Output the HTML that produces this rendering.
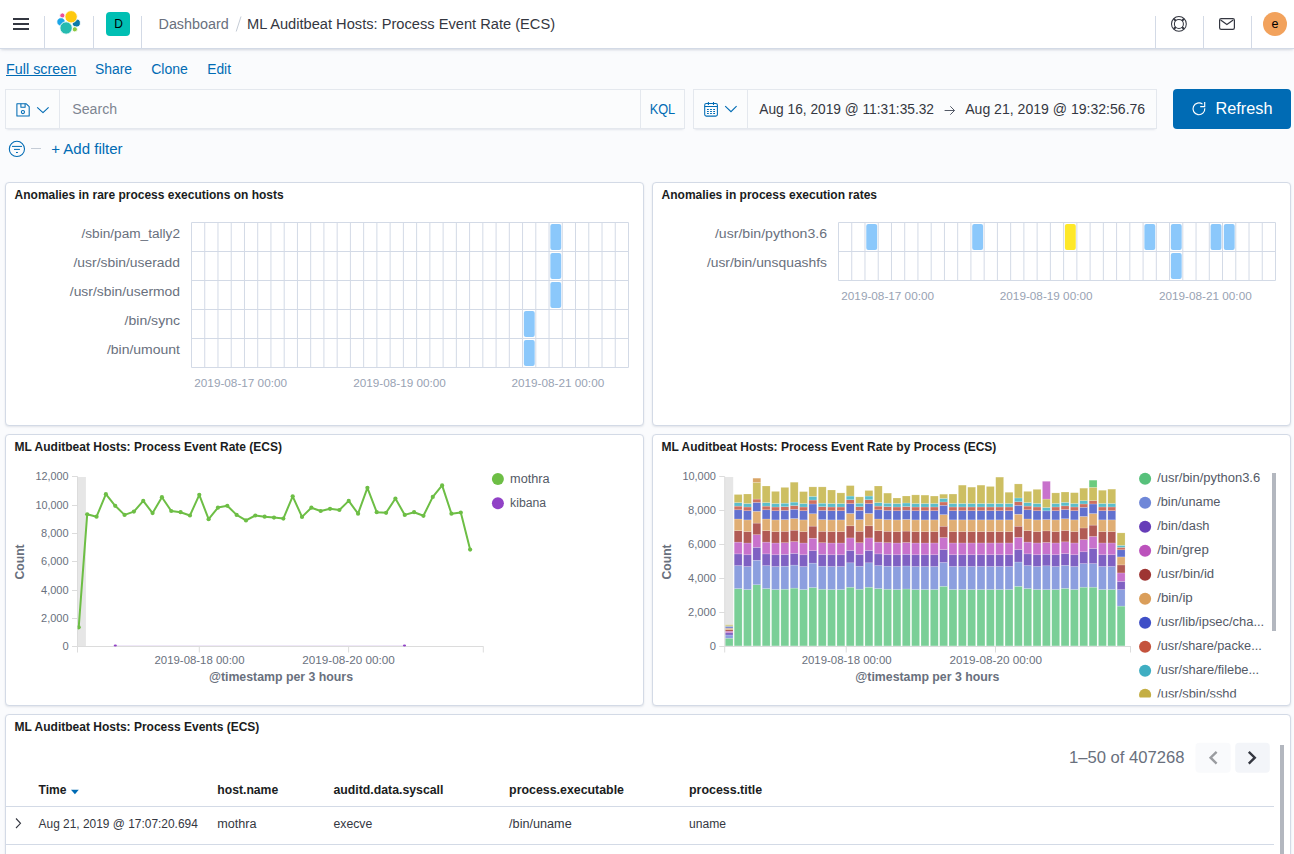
<!DOCTYPE html><html><head><meta charset="utf-8"><style>
*{box-sizing:border-box;margin:0;padding:0}
html,body{width:1294px;height:854px;overflow:hidden}
body{background:#FAFBFD;font-family:"Liberation Sans",sans-serif;color:#343741;position:relative}
.a{position:absolute}
.hdr{position:absolute;left:0;top:0;width:1294px;height:49px;background:#fff;border-bottom:1px solid #D3DAE6;box-shadow:0 2px 2px -1px rgba(152,162,179,.3),0 1px 5px -2px rgba(152,162,179,.3)}
.panel{position:absolute;background:#fff;border:1px solid #D3DAE6;border-radius:4px;box-shadow:0 1px 2px rgba(152,162,179,.25)}
.inp{position:absolute;background:#FBFCFD;border:1px solid #E4E8EE;box-shadow:0 1px 1px -1px rgba(152,162,179,.2),0 3px 2px -2px rgba(152,162,179,.2)}
svg.ov{position:absolute;left:0;top:0;font-family:"Liberation Sans",sans-serif}
</style></head><body>

<div class="hdr"></div>
<div class="inp" style="left:5px;top:89px;width:680px;height:40px"></div>
<div class="inp" style="left:693px;top:89px;width:464px;height:40px"></div>
<div class="panel" style="left:5px;top:182px;width:639px;height:244px"></div>
<div class="panel" style="left:652px;top:182px;width:639px;height:244px"></div>
<div class="panel" style="left:5px;top:434px;width:639px;height:272px"></div>
<div class="panel" style="left:652px;top:434px;width:639px;height:272px"></div>
<div class="panel" style="left:5px;top:714px;width:1286px;height:160px"></div>
<svg class="ov" width="1294" height="854" viewBox="0 0 1294 854">
<rect x="44" y="16" width="1" height="32" fill="#D3DAE6"/>
<rect x="93" y="16" width="1" height="32" fill="#D3DAE6"/>
<rect x="141" y="16" width="1" height="32" fill="#D3DAE6"/>
<rect x="1155" y="16" width="1" height="32" fill="#D3DAE6"/>
<rect x="1203" y="16" width="1" height="32" fill="#D3DAE6"/>
<rect x="1251" y="16" width="1" height="32" fill="#D3DAE6"/>
<g fill="#343741"><rect x="13" y="18" width="16" height="2"/><rect x="13" y="23" width="16" height="2"/><rect x="13" y="28" width="16" height="2"/></g>
<g stroke="#fff" stroke-width="0.9">
<circle cx="62.4" cy="15.5" r="2.6" fill="#EE4F97"/>
<circle cx="61" cy="21.9" r="4.2" fill="#1BA6E8"/>
<circle cx="76.3" cy="23" r="4.1" fill="#0B7AA8"/>
<circle cx="74.8" cy="29.3" r="2.6" fill="#8CC63F"/>
<circle cx="71.1" cy="16.8" r="6.2" fill="#FEC90E"/>
<circle cx="66.1" cy="28" r="6.2" fill="#26BBB0"/>
</g>
<rect x="106" y="12" width="24" height="24" rx="4" fill="#00BFB3"/>
<text x="118.60" y="27.70" font-size="12" fill="#000" text-anchor="middle" >D</text>
<text x="158.50" y="29.00" font-size="14" fill="#69707D" textLength="70.30" lengthAdjust="spacingAndGlyphs" >Dashboard</text>
<path d="M241 16.5L236.2 31.5" stroke="#C5CCD6" stroke-width="1"/>
<text x="247.10" y="29.00" font-size="14" fill="#343741" textLength="308.00" lengthAdjust="spacingAndGlyphs" >ML Auditbeat Hosts: Process Event Rate (ECS)</text>
<g fill="none" stroke="#343741">
<circle cx="1178.9" cy="23.9" r="7.4" stroke-width="1.05"/><circle cx="1178.9" cy="23.9" r="4.5" stroke-width="1.05"/>
<path d="M1181.94 26.94L1184.06 29.06 M1175.86 26.94L1173.74 29.06 M1175.86 20.86L1173.74 18.74 M1181.94 20.86L1184.06 18.74" stroke-width="2"/></g>
<g fill="none" stroke="#343741" stroke-width="1.2">
<rect x="1219.6" y="18.6" width="14.8" height="10.8" rx="1.6"/><path d="M1220.6 19.9L1226.9 24.6L1233.2 19.9"/></g>
<circle cx="1275" cy="24" r="12" fill="#F2A25C"/>
<text x="1275.10" y="27.90" font-size="12.5" fill="#000" text-anchor="middle" >e</text>
<text x="6.10" y="74.00" font-size="14" fill="#006BB4" textLength="70.00" lengthAdjust="spacingAndGlyphs" >Full screen</text>
<rect x="6" y="75" width="70.5" height="1" fill="#006BB4"/>
<text x="95.00" y="74.00" font-size="14" fill="#006BB4" textLength="37.10" lengthAdjust="spacingAndGlyphs" >Share</text>
<text x="151.20" y="74.00" font-size="14" fill="#006BB4" textLength="36.70" lengthAdjust="spacingAndGlyphs" >Clone</text>
<text x="207.20" y="74.00" font-size="14" fill="#006BB4" textLength="23.80" lengthAdjust="spacingAndGlyphs" >Edit</text>
<rect x="59" y="90" width="1" height="38" fill="#E4E8EE"/><rect x="640" y="90" width="1" height="38" fill="#E4E8EE"/>
<g fill="none" stroke="#006BB4" stroke-width="1.05" stroke-linejoin="round">
<path d="M16.9 103.8H26.3L29.2 106.7V115.9H16.9Z"/><path d="M20.9 103.8V107.2H25.1V103.8"/><circle cx="22.9" cy="112" r="1.6"/>
<path d="M37.2 107.4L43 112.6L48.6 107.4" stroke-width="1.15"/></g>
<text x="72.30" y="114.00" font-size="14" fill="#7E8591" textLength="44.80" lengthAdjust="spacingAndGlyphs" >Search</text>
<text x="649.70" y="114.00" font-size="14" fill="#006BB4" textLength="25.50" lengthAdjust="spacingAndGlyphs" >KQL</text>
<rect x="747" y="90" width="1" height="38" fill="#E4E8EE"/>
<g fill="none" stroke="#006BB4" stroke-width="1.05">
<rect x="704.7" y="103.4" width="12.7" height="12.7" rx="1.6"/><path d="M704.7 106.4H717.4M708.4 102V105M713.5 102V105"/>
<path d="M725.2 106.2L731 111.6L736.6 106.2" stroke-width="1.15"/></g>
<g fill="#006BB4"><rect x="707" y="109" width="1.8" height="1"/><rect x="710.1" y="109" width="1.8" height="1"/><rect x="713.2" y="109" width="1.8" height="1"/>
<rect x="707" y="111" width="1.8" height="1"/><rect x="710.1" y="111" width="1.8" height="1"/><rect x="713.2" y="111" width="1.8" height="1"/>
<rect x="707" y="113" width="1.8" height="1"/><rect x="710.1" y="113" width="1.8" height="1"/><rect x="713.2" y="113" width="1.8" height="1"/></g>
<text x="759.30" y="114.00" font-size="14" fill="#343741" textLength="174.70" lengthAdjust="spacingAndGlyphs" >Aug 16, 2019 @ 11:31:35.32</text>
<path d="M944.6 110.5H954.5M950.3 106.3L954.5 110.5L950.3 114.7" fill="none" stroke="#535966" stroke-width="1"/>
<text x="965.20" y="114.00" font-size="14" fill="#343741" textLength="180.00" lengthAdjust="spacingAndGlyphs" >Aug 21, 2019 @ 19:32:56.76</text>
<rect x="1173" y="89" width="118" height="40" rx="4" fill="#006BB4"/>
<g fill="none" stroke="#fff" stroke-width="1.15">
<path d="M1204.78 108.29A5.9 5.9 0 1 1 1202.53 104.15"/><path d="M1204.7 102.1V106.6H1200.2"/></g>
<text x="1215.50" y="114.00" font-size="16" fill="#fff" textLength="57.00" lengthAdjust="spacingAndGlyphs" >Refresh</text>
<g fill="none" stroke="#006BB4" stroke-width="1.05">
<circle cx="16.9" cy="148.9" r="7.6"/></g><g fill="#006BB4"><rect x="12" y="145.9" width="10" height="1"/><rect x="14" y="148.9" width="5.9" height="1"/><rect x="16" y="152" width="1.9" height="1"/></g>
<rect x="31" y="148" width="10" height="1" fill="#C5CCD6"/>
<text x="51.20" y="154.00" font-size="14" fill="#006BB4" textLength="71.40" lengthAdjust="spacingAndGlyphs" >+ Add filter</text>
<text x="14.60" y="199.10" font-size="12" fill="#1a1c21" font-weight="bold" textLength="269.00" lengthAdjust="spacingAndGlyphs" >Anomalies in rare process executions on hosts</text>
<text x="661.60" y="199.10" font-size="12" fill="#1a1c21" font-weight="bold" >Anomalies in process execution rates</text>
<text x="14.60" y="451.00" font-size="12" fill="#1a1c21" font-weight="bold" >ML Auditbeat Hosts: Process Event Rate (ECS)</text>
<text x="661.60" y="451.00" font-size="12" fill="#1a1c21" font-weight="bold" >ML Auditbeat Hosts: Process Event Rate by Process (ECS)</text>
<text x="14.60" y="731.00" font-size="12" fill="#1a1c21" font-weight="bold" >ML Auditbeat Hosts: Process Events (ECS)</text>
<path d="M191.50 222.5V367.5 M204.74 222.5V367.5 M217.98 222.5V367.5 M231.23 222.5V367.5 M244.47 222.5V367.5 M257.71 222.5V367.5 M270.95 222.5V367.5 M284.20 222.5V367.5 M297.44 222.5V367.5 M310.68 222.5V367.5 M323.92 222.5V367.5 M337.17 222.5V367.5 M350.41 222.5V367.5 M363.65 222.5V367.5 M376.89 222.5V367.5 M390.14 222.5V367.5 M403.38 222.5V367.5 M416.62 222.5V367.5 M429.86 222.5V367.5 M443.11 222.5V367.5 M456.35 222.5V367.5 M469.59 222.5V367.5 M482.83 222.5V367.5 M496.08 222.5V367.5 M509.32 222.5V367.5 M522.56 222.5V367.5 M535.80 222.5V367.5 M549.05 222.5V367.5 M562.29 222.5V367.5 M575.53 222.5V367.5 M588.77 222.5V367.5 M602.02 222.5V367.5 M615.26 222.5V367.5 M628.50 222.5V367.5 M191.5 222.5H628.5 M191.5 251.5H628.5 M191.5 280.5H628.5 M191.5 309.5H628.5 M191.5 338.5H628.5 M191.5 367.5H628.5" stroke="#D3DAE6" stroke-width="1" fill="none"/>
<rect x="550.35" y="223.90" width="10.84" height="26.10" rx="2" fill="#8BC8FB"/>
<rect x="550.35" y="252.90" width="10.84" height="26.10" rx="2" fill="#8BC8FB"/>
<rect x="550.35" y="281.90" width="10.84" height="26.10" rx="2" fill="#8BC8FB"/>
<rect x="523.86" y="310.90" width="10.84" height="26.10" rx="2" fill="#8BC8FB"/>
<rect x="523.86" y="339.90" width="10.84" height="26.10" rx="2" fill="#8BC8FB"/>
<text x="180.00" y="238.10" font-size="12.5" fill="#69707D" text-anchor="end" textLength="98.50" lengthAdjust="spacingAndGlyphs" >/sbin/pam_tally2</text>
<text x="180.00" y="267.10" font-size="12.5" fill="#69707D" text-anchor="end" textLength="106.50" lengthAdjust="spacingAndGlyphs" >/usr/sbin/useradd</text>
<text x="180.00" y="296.10" font-size="12.5" fill="#69707D" text-anchor="end" textLength="110.20" lengthAdjust="spacingAndGlyphs" >/usr/sbin/usermod</text>
<text x="180.00" y="325.10" font-size="12.5" fill="#69707D" text-anchor="end" textLength="55.40" lengthAdjust="spacingAndGlyphs" >/bin/sync</text>
<text x="180.00" y="354.10" font-size="12.5" fill="#69707D" text-anchor="end" textLength="73.10" lengthAdjust="spacingAndGlyphs" >/bin/umount</text>
<text x="194.30" y="386.80" font-size="11" fill="#98A2B3" textLength="92.70" lengthAdjust="spacingAndGlyphs" >2019-08-17 00:00</text>
<text x="353.20" y="386.80" font-size="11" fill="#98A2B3" textLength="92.70" lengthAdjust="spacingAndGlyphs" >2019-08-19 00:00</text>
<text x="511.50" y="386.80" font-size="11" fill="#98A2B3" textLength="92.70" lengthAdjust="spacingAndGlyphs" >2019-08-21 00:00</text>
<path d="M838.50 222.5V280.5 M851.74 222.5V280.5 M864.98 222.5V280.5 M878.23 222.5V280.5 M891.47 222.5V280.5 M904.71 222.5V280.5 M917.95 222.5V280.5 M931.20 222.5V280.5 M944.44 222.5V280.5 M957.68 222.5V280.5 M970.92 222.5V280.5 M984.17 222.5V280.5 M997.41 222.5V280.5 M1010.65 222.5V280.5 M1023.89 222.5V280.5 M1037.14 222.5V280.5 M1050.38 222.5V280.5 M1063.62 222.5V280.5 M1076.86 222.5V280.5 M1090.11 222.5V280.5 M1103.35 222.5V280.5 M1116.59 222.5V280.5 M1129.83 222.5V280.5 M1143.08 222.5V280.5 M1156.32 222.5V280.5 M1169.56 222.5V280.5 M1182.80 222.5V280.5 M1196.05 222.5V280.5 M1209.29 222.5V280.5 M1222.53 222.5V280.5 M1235.77 222.5V280.5 M1249.02 222.5V280.5 M1262.26 222.5V280.5 M1275.50 222.5V280.5 M838.5 222.5H1275.5 M838.5 251.5H1275.5 M838.5 280.5H1275.5" stroke="#D3DAE6" stroke-width="1" fill="none"/>
<rect x="866.28" y="223.90" width="10.84" height="26.10" rx="2" fill="#8BC8FB"/>
<rect x="972.22" y="223.90" width="10.84" height="26.10" rx="2" fill="#8BC8FB"/>
<rect x="1064.92" y="223.90" width="10.84" height="26.10" rx="2" fill="#FEE829"/>
<rect x="1144.38" y="223.90" width="10.84" height="26.10" rx="2" fill="#8BC8FB"/>
<rect x="1170.86" y="223.90" width="10.84" height="26.10" rx="2" fill="#8BC8FB"/>
<rect x="1210.59" y="223.90" width="10.84" height="26.10" rx="2" fill="#8BC8FB"/>
<rect x="1223.83" y="223.90" width="10.84" height="26.10" rx="2" fill="#8BC8FB"/>
<rect x="1170.86" y="252.90" width="10.84" height="26.10" rx="2" fill="#8BC8FB"/>
<text x="827.00" y="238.10" font-size="12.5" fill="#69707D" text-anchor="end" textLength="112.10" lengthAdjust="spacingAndGlyphs" >/usr/bin/python3.6</text>
<text x="827.00" y="267.10" font-size="12.5" fill="#69707D" text-anchor="end" textLength="120.10" lengthAdjust="spacingAndGlyphs" >/usr/bin/unsquashfs</text>
<text x="841.30" y="299.80" font-size="11" fill="#98A2B3" textLength="92.70" lengthAdjust="spacingAndGlyphs" >2019-08-17 00:00</text>
<text x="999.80" y="299.80" font-size="11" fill="#98A2B3" textLength="92.70" lengthAdjust="spacingAndGlyphs" >2019-08-19 00:00</text>
<text x="1159.00" y="299.80" font-size="11" fill="#98A2B3" textLength="92.70" lengthAdjust="spacingAndGlyphs" >2019-08-21 00:00</text>
<rect x="77.7" y="477" width="8.2" height="169.5" fill="#E6E6E6"/>
<rect x="77" y="476.4" width="1" height="170.5" fill="#DCDCDC"/>
<rect x="77" y="646" width="406.5" height="1" fill="#DCDCDC"/>
<rect x="77.00" y="646.5" width="1" height="6" fill="#DCDCDC"/>
<rect x="198.80" y="646.5" width="1" height="6" fill="#DCDCDC"/>
<rect x="348.10" y="646.5" width="1" height="6" fill="#DCDCDC"/>
<rect x="482.80" y="646.5" width="1" height="6" fill="#DCDCDC"/>
<rect x="72.00" y="646.00" width="5.5" height="1" fill="#DCDCDC"/>
<text x="68.60" y="650.40" font-size="11" fill="#69707D" text-anchor="end" textLength="6.20" lengthAdjust="spacingAndGlyphs" >0</text>
<rect x="72.00" y="618.00" width="5.5" height="1" fill="#DCDCDC"/>
<text x="68.60" y="622.40" font-size="11" fill="#69707D" text-anchor="end" textLength="27.58" lengthAdjust="spacingAndGlyphs" >2,000</text>
<rect x="72.00" y="590.00" width="5.5" height="1" fill="#DCDCDC"/>
<text x="68.60" y="594.40" font-size="11" fill="#69707D" text-anchor="end" textLength="27.58" lengthAdjust="spacingAndGlyphs" >4,000</text>
<rect x="72.00" y="561.00" width="5.5" height="1" fill="#DCDCDC"/>
<text x="68.60" y="565.40" font-size="11" fill="#69707D" text-anchor="end" textLength="27.58" lengthAdjust="spacingAndGlyphs" >6,000</text>
<rect x="72.00" y="533.00" width="5.5" height="1" fill="#DCDCDC"/>
<text x="68.60" y="537.40" font-size="11" fill="#69707D" text-anchor="end" textLength="27.58" lengthAdjust="spacingAndGlyphs" >8,000</text>
<rect x="72.00" y="505.00" width="5.5" height="1" fill="#DCDCDC"/>
<text x="68.60" y="509.40" font-size="11" fill="#69707D" text-anchor="end" textLength="33.10" lengthAdjust="spacingAndGlyphs" >10,000</text>
<rect x="72.00" y="476.00" width="5.5" height="1" fill="#DCDCDC"/>
<text x="68.60" y="480.40" font-size="11" fill="#69707D" text-anchor="end" textLength="33.10" lengthAdjust="spacingAndGlyphs" >12,000</text>
<text x="154.50" y="663.70" font-size="11" fill="#69707D" textLength="90.00" lengthAdjust="spacingAndGlyphs" >2019-08-18 00:00</text>
<text x="302.30" y="663.70" font-size="11" fill="#69707D" textLength="92.50" lengthAdjust="spacingAndGlyphs" >2019-08-20 00:00</text>
<text x="208.90" y="681.10" font-size="12" fill="#69707D" font-weight="bold" textLength="144.10" lengthAdjust="spacingAndGlyphs" >@timestamp per 3 hours</text>
<text x="0.00" y="0.00" font-size="12" fill="#69707D" font-weight="bold" text-anchor="middle" textLength="35.00" lengthAdjust="spacingAndGlyphs" transform="translate(23.9,561.9) rotate(-90)">Count</text>
<rect x="115" y="645" width="290" height="1" fill="#EFE8F7"/>
<ellipse cx="115.3" cy="645.4" rx="1.6" ry="1" fill="#9141C6"/><ellipse cx="404.5" cy="645.4" rx="1.6" ry="1" fill="#9141C6"/>
<clipPath id="lcc"><rect x="77.6" y="470" width="410" height="180"/></clipPath><g clip-path="url(#lcc)">
<polyline fill="none" stroke="#6DBE45" stroke-width="2" stroke-linejoin="round" points="78.70,627.30 87.20,514.30 96.54,516.70 105.88,494.20 115.22,505.80 124.56,514.90 133.90,511.60 143.24,500.90 152.58,513.10 161.92,497.20 171.26,511.00 180.60,512.20 189.94,515.50 199.28,494.80 208.62,519.20 217.96,507.60 227.30,505.80 236.64,514.90 245.98,520.40 255.32,515.50 264.66,516.70 274.00,517.60 283.34,518.60 292.68,496.30 302.02,516.90 311.36,507.70 320.70,511.00 330.04,508.80 339.38,510.00 348.72,500.90 358.06,513.70 367.40,487.80 376.74,512.20 386.08,512.80 395.42,498.50 404.76,514.90 414.10,512.20 423.44,515.80 432.78,496.90 442.12,485.40 451.46,513.70 460.80,512.50 470.14,549.60"/>
<g fill="#6DBE45"><circle cx="78.70" cy="627.30" r="2.1"/><circle cx="87.20" cy="514.30" r="2.1"/><circle cx="96.54" cy="516.70" r="2.1"/><circle cx="105.88" cy="494.20" r="2.1"/><circle cx="115.22" cy="505.80" r="2.1"/><circle cx="124.56" cy="514.90" r="2.1"/><circle cx="133.90" cy="511.60" r="2.1"/><circle cx="143.24" cy="500.90" r="2.1"/><circle cx="152.58" cy="513.10" r="2.1"/><circle cx="161.92" cy="497.20" r="2.1"/><circle cx="171.26" cy="511.00" r="2.1"/><circle cx="180.60" cy="512.20" r="2.1"/><circle cx="189.94" cy="515.50" r="2.1"/><circle cx="199.28" cy="494.80" r="2.1"/><circle cx="208.62" cy="519.20" r="2.1"/><circle cx="217.96" cy="507.60" r="2.1"/><circle cx="227.30" cy="505.80" r="2.1"/><circle cx="236.64" cy="514.90" r="2.1"/><circle cx="245.98" cy="520.40" r="2.1"/><circle cx="255.32" cy="515.50" r="2.1"/><circle cx="264.66" cy="516.70" r="2.1"/><circle cx="274.00" cy="517.60" r="2.1"/><circle cx="283.34" cy="518.60" r="2.1"/><circle cx="292.68" cy="496.30" r="2.1"/><circle cx="302.02" cy="516.90" r="2.1"/><circle cx="311.36" cy="507.70" r="2.1"/><circle cx="320.70" cy="511.00" r="2.1"/><circle cx="330.04" cy="508.80" r="2.1"/><circle cx="339.38" cy="510.00" r="2.1"/><circle cx="348.72" cy="500.90" r="2.1"/><circle cx="358.06" cy="513.70" r="2.1"/><circle cx="367.40" cy="487.80" r="2.1"/><circle cx="376.74" cy="512.20" r="2.1"/><circle cx="386.08" cy="512.80" r="2.1"/><circle cx="395.42" cy="498.50" r="2.1"/><circle cx="404.76" cy="514.90" r="2.1"/><circle cx="414.10" cy="512.20" r="2.1"/><circle cx="423.44" cy="515.80" r="2.1"/><circle cx="432.78" cy="496.90" r="2.1"/><circle cx="442.12" cy="485.40" r="2.1"/><circle cx="451.46" cy="513.70" r="2.1"/><circle cx="460.80" cy="512.50" r="2.1"/><circle cx="470.14" cy="549.60" r="2.1"/></g></g>
<circle cx="497.9" cy="479" r="6" fill="#6DBE45"/><circle cx="497.9" cy="503.3" r="6" fill="#9141C6"/>
<text x="510.10" y="483.00" font-size="12" fill="#535966" textLength="39.60" lengthAdjust="spacingAndGlyphs" >mothra</text>
<text x="510.10" y="507.20" font-size="12" fill="#535966" textLength="36.00" lengthAdjust="spacingAndGlyphs" >kibana</text>
<rect x="725" y="477" width="8.2" height="169.5" fill="#E6E6E6"/>
<g stroke="#fff" stroke-opacity="0.35" stroke-width="0.5"><rect x="734.20" y="588.60" width="7.9" height="57.30" fill="#7ACF97"/><rect x="734.20" y="565.60" width="7.9" height="23.00" fill="#8C9FDF"/><rect x="734.20" y="553.90" width="7.9" height="11.70" fill="#7F61C3"/><rect x="734.20" y="542.10" width="7.9" height="11.80" fill="#C872CC"/><rect x="734.20" y="530.70" width="7.9" height="11.40" fill="#B15A55"/><rect x="734.20" y="519.00" width="7.9" height="11.70" fill="#E0AE74"/><rect x="734.20" y="509.80" width="7.9" height="9.20" fill="#6271CF"/><rect x="734.20" y="506.10" width="7.9" height="3.70" fill="#CE6F5F"/><rect x="734.20" y="502.60" width="7.9" height="3.50" fill="#5BBDCB"/><rect x="734.20" y="494.50" width="7.9" height="8.10" fill="#CDBF62"/><rect x="743.54" y="589.50" width="7.9" height="56.40" fill="#7ACF97"/><rect x="743.54" y="566.50" width="7.9" height="23.00" fill="#8C9FDF"/><rect x="743.54" y="554.80" width="7.9" height="11.70" fill="#7F61C3"/><rect x="743.54" y="543.00" width="7.9" height="11.80" fill="#C872CC"/><rect x="743.54" y="531.60" width="7.9" height="11.40" fill="#B15A55"/><rect x="743.54" y="519.90" width="7.9" height="11.70" fill="#E0AE74"/><rect x="743.54" y="510.70" width="7.9" height="9.20" fill="#6271CF"/><rect x="743.54" y="507.00" width="7.9" height="3.70" fill="#CE6F5F"/><rect x="743.54" y="503.50" width="7.9" height="3.50" fill="#5BBDCB"/><rect x="743.54" y="494.00" width="7.9" height="9.50" fill="#CDBF62"/><rect x="762.22" y="588.60" width="7.9" height="57.30" fill="#7ACF97"/><rect x="762.22" y="565.60" width="7.9" height="23.00" fill="#8C9FDF"/><rect x="762.22" y="553.90" width="7.9" height="11.70" fill="#7F61C3"/><rect x="762.22" y="542.10" width="7.9" height="11.80" fill="#C872CC"/><rect x="762.22" y="530.70" width="7.9" height="11.40" fill="#B15A55"/><rect x="762.22" y="519.00" width="7.9" height="11.70" fill="#E0AE74"/><rect x="762.22" y="509.80" width="7.9" height="9.20" fill="#6271CF"/><rect x="762.22" y="506.10" width="7.9" height="3.70" fill="#CE6F5F"/><rect x="762.22" y="502.60" width="7.9" height="3.50" fill="#5BBDCB"/><rect x="762.22" y="486.00" width="7.9" height="16.60" fill="#CDBF62"/><rect x="771.56" y="589.50" width="7.9" height="56.40" fill="#7ACF97"/><rect x="771.56" y="566.50" width="7.9" height="23.00" fill="#8C9FDF"/><rect x="771.56" y="554.80" width="7.9" height="11.70" fill="#7F61C3"/><rect x="771.56" y="543.00" width="7.9" height="11.80" fill="#C872CC"/><rect x="771.56" y="531.60" width="7.9" height="11.40" fill="#B15A55"/><rect x="771.56" y="519.90" width="7.9" height="11.70" fill="#E0AE74"/><rect x="771.56" y="510.70" width="7.9" height="9.20" fill="#6271CF"/><rect x="771.56" y="507.00" width="7.9" height="3.70" fill="#CE6F5F"/><rect x="771.56" y="503.50" width="7.9" height="3.50" fill="#5BBDCB"/><rect x="771.56" y="491.40" width="7.9" height="12.10" fill="#CDBF62"/><rect x="780.90" y="589.20" width="7.9" height="56.70" fill="#7ACF97"/><rect x="780.90" y="566.20" width="7.9" height="23.00" fill="#8C9FDF"/><rect x="780.90" y="554.50" width="7.9" height="11.70" fill="#7F61C3"/><rect x="780.90" y="542.70" width="7.9" height="11.80" fill="#C872CC"/><rect x="780.90" y="531.30" width="7.9" height="11.40" fill="#B15A55"/><rect x="780.90" y="519.60" width="7.9" height="11.70" fill="#E0AE74"/><rect x="780.90" y="510.40" width="7.9" height="9.20" fill="#6271CF"/><rect x="780.90" y="506.70" width="7.9" height="3.70" fill="#CE6F5F"/><rect x="780.90" y="503.20" width="7.9" height="3.50" fill="#5BBDCB"/><rect x="780.90" y="487.40" width="7.9" height="15.80" fill="#CDBF62"/><rect x="790.24" y="588.10" width="7.9" height="57.80" fill="#7ACF97"/><rect x="790.24" y="565.10" width="7.9" height="23.00" fill="#8C9FDF"/><rect x="790.24" y="553.40" width="7.9" height="11.70" fill="#7F61C3"/><rect x="790.24" y="541.60" width="7.9" height="11.80" fill="#C872CC"/><rect x="790.24" y="530.20" width="7.9" height="11.40" fill="#B15A55"/><rect x="790.24" y="518.50" width="7.9" height="11.70" fill="#E0AE74"/><rect x="790.24" y="509.30" width="7.9" height="9.20" fill="#6271CF"/><rect x="790.24" y="505.60" width="7.9" height="3.70" fill="#CE6F5F"/><rect x="790.24" y="502.10" width="7.9" height="3.50" fill="#5BBDCB"/><rect x="790.24" y="482.20" width="7.9" height="19.90" fill="#CDBF62"/><rect x="799.58" y="589.50" width="7.9" height="56.40" fill="#7ACF97"/><rect x="799.58" y="566.50" width="7.9" height="23.00" fill="#8C9FDF"/><rect x="799.58" y="554.80" width="7.9" height="11.70" fill="#7F61C3"/><rect x="799.58" y="543.00" width="7.9" height="11.80" fill="#C872CC"/><rect x="799.58" y="531.60" width="7.9" height="11.40" fill="#B15A55"/><rect x="799.58" y="519.90" width="7.9" height="11.70" fill="#E0AE74"/><rect x="799.58" y="510.70" width="7.9" height="9.20" fill="#6271CF"/><rect x="799.58" y="507.00" width="7.9" height="3.70" fill="#CE6F5F"/><rect x="799.58" y="503.50" width="7.9" height="3.50" fill="#5BBDCB"/><rect x="799.58" y="491.60" width="7.9" height="11.90" fill="#CDBF62"/><rect x="808.92" y="587.50" width="7.9" height="58.40" fill="#7ACF97"/><rect x="808.92" y="563.12" width="7.9" height="24.38" fill="#8C9FDF"/><rect x="808.92" y="550.72" width="7.9" height="12.40" fill="#7F61C3"/><rect x="808.92" y="538.21" width="7.9" height="12.51" fill="#C872CC"/><rect x="808.92" y="526.13" width="7.9" height="12.08" fill="#B15A55"/><rect x="808.92" y="513.72" width="7.9" height="12.40" fill="#E0AE74"/><rect x="808.92" y="503.97" width="7.9" height="9.75" fill="#6271CF"/><rect x="808.92" y="500.05" width="7.9" height="3.92" fill="#CE6F5F"/><rect x="808.92" y="496.34" width="7.9" height="3.71" fill="#5BBDCB"/><rect x="808.92" y="486.90" width="7.9" height="9.44" fill="#CDBF62"/><rect x="818.26" y="589.20" width="7.9" height="56.70" fill="#7ACF97"/><rect x="818.26" y="566.20" width="7.9" height="23.00" fill="#8C9FDF"/><rect x="818.26" y="554.50" width="7.9" height="11.70" fill="#7F61C3"/><rect x="818.26" y="542.70" width="7.9" height="11.80" fill="#C872CC"/><rect x="818.26" y="531.30" width="7.9" height="11.40" fill="#B15A55"/><rect x="818.26" y="519.60" width="7.9" height="11.70" fill="#E0AE74"/><rect x="818.26" y="510.40" width="7.9" height="9.20" fill="#6271CF"/><rect x="818.26" y="506.70" width="7.9" height="3.70" fill="#CE6F5F"/><rect x="818.26" y="503.20" width="7.9" height="3.50" fill="#5BBDCB"/><rect x="818.26" y="486.90" width="7.9" height="16.30" fill="#CDBF62"/><rect x="827.60" y="589.50" width="7.9" height="56.40" fill="#7ACF97"/><rect x="827.60" y="566.50" width="7.9" height="23.00" fill="#8C9FDF"/><rect x="827.60" y="554.80" width="7.9" height="11.70" fill="#7F61C3"/><rect x="827.60" y="543.00" width="7.9" height="11.80" fill="#C872CC"/><rect x="827.60" y="531.60" width="7.9" height="11.40" fill="#B15A55"/><rect x="827.60" y="519.90" width="7.9" height="11.70" fill="#E0AE74"/><rect x="827.60" y="510.70" width="7.9" height="9.20" fill="#6271CF"/><rect x="827.60" y="507.00" width="7.9" height="3.70" fill="#CE6F5F"/><rect x="827.60" y="503.50" width="7.9" height="3.50" fill="#5BBDCB"/><rect x="827.60" y="490.00" width="7.9" height="13.50" fill="#CDBF62"/><rect x="836.94" y="589.50" width="7.9" height="56.40" fill="#7ACF97"/><rect x="836.94" y="566.50" width="7.9" height="23.00" fill="#8C9FDF"/><rect x="836.94" y="554.80" width="7.9" height="11.70" fill="#7F61C3"/><rect x="836.94" y="543.00" width="7.9" height="11.80" fill="#C872CC"/><rect x="836.94" y="531.60" width="7.9" height="11.40" fill="#B15A55"/><rect x="836.94" y="519.90" width="7.9" height="11.70" fill="#E0AE74"/><rect x="836.94" y="510.70" width="7.9" height="9.20" fill="#6271CF"/><rect x="836.94" y="507.00" width="7.9" height="3.70" fill="#CE6F5F"/><rect x="836.94" y="503.50" width="7.9" height="3.50" fill="#5BBDCB"/><rect x="836.94" y="492.90" width="7.9" height="10.60" fill="#CDBF62"/><rect x="846.28" y="587.20" width="7.9" height="58.70" fill="#7ACF97"/><rect x="846.28" y="562.82" width="7.9" height="24.38" fill="#8C9FDF"/><rect x="846.28" y="550.42" width="7.9" height="12.40" fill="#7F61C3"/><rect x="846.28" y="537.91" width="7.9" height="12.51" fill="#C872CC"/><rect x="846.28" y="525.83" width="7.9" height="12.08" fill="#B15A55"/><rect x="846.28" y="513.42" width="7.9" height="12.40" fill="#E0AE74"/><rect x="846.28" y="503.67" width="7.9" height="9.75" fill="#6271CF"/><rect x="846.28" y="499.75" width="7.9" height="3.92" fill="#CE6F5F"/><rect x="846.28" y="496.04" width="7.9" height="3.71" fill="#5BBDCB"/><rect x="846.28" y="485.60" width="7.9" height="10.44" fill="#CDBF62"/><rect x="855.62" y="589.20" width="7.9" height="56.70" fill="#7ACF97"/><rect x="855.62" y="566.20" width="7.9" height="23.00" fill="#8C9FDF"/><rect x="855.62" y="554.50" width="7.9" height="11.70" fill="#7F61C3"/><rect x="855.62" y="542.70" width="7.9" height="11.80" fill="#C872CC"/><rect x="855.62" y="531.30" width="7.9" height="11.40" fill="#B15A55"/><rect x="855.62" y="519.60" width="7.9" height="11.70" fill="#E0AE74"/><rect x="855.62" y="510.40" width="7.9" height="9.20" fill="#6271CF"/><rect x="855.62" y="506.70" width="7.9" height="3.70" fill="#CE6F5F"/><rect x="855.62" y="503.20" width="7.9" height="3.50" fill="#5BBDCB"/><rect x="855.62" y="496.90" width="7.9" height="6.30" fill="#CDBF62"/><rect x="864.96" y="587.20" width="7.9" height="58.70" fill="#7ACF97"/><rect x="864.96" y="562.82" width="7.9" height="24.38" fill="#8C9FDF"/><rect x="864.96" y="550.42" width="7.9" height="12.40" fill="#7F61C3"/><rect x="864.96" y="537.91" width="7.9" height="12.51" fill="#C872CC"/><rect x="864.96" y="525.83" width="7.9" height="12.08" fill="#B15A55"/><rect x="864.96" y="513.42" width="7.9" height="12.40" fill="#E0AE74"/><rect x="864.96" y="503.67" width="7.9" height="9.75" fill="#6271CF"/><rect x="864.96" y="499.75" width="7.9" height="3.92" fill="#CE6F5F"/><rect x="864.96" y="496.04" width="7.9" height="3.71" fill="#5BBDCB"/><rect x="864.96" y="490.50" width="7.9" height="5.54" fill="#CDBF62"/><rect x="874.30" y="588.60" width="7.9" height="57.30" fill="#7ACF97"/><rect x="874.30" y="565.60" width="7.9" height="23.00" fill="#8C9FDF"/><rect x="874.30" y="553.90" width="7.9" height="11.70" fill="#7F61C3"/><rect x="874.30" y="542.10" width="7.9" height="11.80" fill="#C872CC"/><rect x="874.30" y="530.70" width="7.9" height="11.40" fill="#B15A55"/><rect x="874.30" y="519.00" width="7.9" height="11.70" fill="#E0AE74"/><rect x="874.30" y="509.80" width="7.9" height="9.20" fill="#6271CF"/><rect x="874.30" y="506.10" width="7.9" height="3.70" fill="#CE6F5F"/><rect x="874.30" y="502.60" width="7.9" height="3.50" fill="#5BBDCB"/><rect x="874.30" y="486.00" width="7.9" height="16.60" fill="#CDBF62"/><rect x="883.64" y="589.20" width="7.9" height="56.70" fill="#7ACF97"/><rect x="883.64" y="566.20" width="7.9" height="23.00" fill="#8C9FDF"/><rect x="883.64" y="554.50" width="7.9" height="11.70" fill="#7F61C3"/><rect x="883.64" y="542.70" width="7.9" height="11.80" fill="#C872CC"/><rect x="883.64" y="531.30" width="7.9" height="11.40" fill="#B15A55"/><rect x="883.64" y="519.60" width="7.9" height="11.70" fill="#E0AE74"/><rect x="883.64" y="510.40" width="7.9" height="9.20" fill="#6271CF"/><rect x="883.64" y="506.70" width="7.9" height="3.70" fill="#CE6F5F"/><rect x="883.64" y="503.20" width="7.9" height="3.50" fill="#5BBDCB"/><rect x="883.64" y="493.10" width="7.9" height="10.10" fill="#CDBF62"/><rect x="892.98" y="589.50" width="7.9" height="56.40" fill="#7ACF97"/><rect x="892.98" y="566.50" width="7.9" height="23.00" fill="#8C9FDF"/><rect x="892.98" y="554.80" width="7.9" height="11.70" fill="#7F61C3"/><rect x="892.98" y="543.00" width="7.9" height="11.80" fill="#C872CC"/><rect x="892.98" y="531.60" width="7.9" height="11.40" fill="#B15A55"/><rect x="892.98" y="519.90" width="7.9" height="11.70" fill="#E0AE74"/><rect x="892.98" y="510.70" width="7.9" height="9.20" fill="#6271CF"/><rect x="892.98" y="507.00" width="7.9" height="3.70" fill="#CE6F5F"/><rect x="892.98" y="503.50" width="7.9" height="3.50" fill="#5BBDCB"/><rect x="892.98" y="498.00" width="7.9" height="5.50" fill="#CDBF62"/><rect x="902.32" y="589.00" width="7.9" height="56.90" fill="#7ACF97"/><rect x="902.32" y="566.00" width="7.9" height="23.00" fill="#8C9FDF"/><rect x="902.32" y="554.30" width="7.9" height="11.70" fill="#7F61C3"/><rect x="902.32" y="542.50" width="7.9" height="11.80" fill="#C872CC"/><rect x="902.32" y="531.10" width="7.9" height="11.40" fill="#B15A55"/><rect x="902.32" y="519.40" width="7.9" height="11.70" fill="#E0AE74"/><rect x="902.32" y="510.20" width="7.9" height="9.20" fill="#6271CF"/><rect x="902.32" y="506.50" width="7.9" height="3.70" fill="#CE6F5F"/><rect x="902.32" y="503.00" width="7.9" height="3.50" fill="#5BBDCB"/><rect x="902.32" y="496.00" width="7.9" height="7.00" fill="#CDBF62"/><rect x="911.66" y="589.50" width="7.9" height="56.40" fill="#7ACF97"/><rect x="911.66" y="566.50" width="7.9" height="23.00" fill="#8C9FDF"/><rect x="911.66" y="554.80" width="7.9" height="11.70" fill="#7F61C3"/><rect x="911.66" y="543.00" width="7.9" height="11.80" fill="#C872CC"/><rect x="911.66" y="531.60" width="7.9" height="11.40" fill="#B15A55"/><rect x="911.66" y="519.90" width="7.9" height="11.70" fill="#E0AE74"/><rect x="911.66" y="510.70" width="7.9" height="9.20" fill="#6271CF"/><rect x="911.66" y="507.00" width="7.9" height="3.70" fill="#CE6F5F"/><rect x="911.66" y="503.50" width="7.9" height="3.50" fill="#5BBDCB"/><rect x="911.66" y="494.90" width="7.9" height="8.60" fill="#CDBF62"/><rect x="921.00" y="589.50" width="7.9" height="56.40" fill="#7ACF97"/><rect x="921.00" y="566.50" width="7.9" height="23.00" fill="#8C9FDF"/><rect x="921.00" y="554.80" width="7.9" height="11.70" fill="#7F61C3"/><rect x="921.00" y="543.00" width="7.9" height="11.80" fill="#C872CC"/><rect x="921.00" y="531.60" width="7.9" height="11.40" fill="#B15A55"/><rect x="921.00" y="519.90" width="7.9" height="11.70" fill="#E0AE74"/><rect x="921.00" y="510.70" width="7.9" height="9.20" fill="#6271CF"/><rect x="921.00" y="507.00" width="7.9" height="3.70" fill="#CE6F5F"/><rect x="921.00" y="503.50" width="7.9" height="3.50" fill="#5BBDCB"/><rect x="921.00" y="495.10" width="7.9" height="8.40" fill="#CDBF62"/><rect x="930.34" y="589.47" width="7.9" height="56.43" fill="#7ACF97"/><rect x="930.34" y="566.47" width="7.9" height="23.00" fill="#8C9FDF"/><rect x="930.34" y="554.77" width="7.9" height="11.70" fill="#7F61C3"/><rect x="930.34" y="542.97" width="7.9" height="11.80" fill="#C872CC"/><rect x="930.34" y="531.57" width="7.9" height="11.40" fill="#B15A55"/><rect x="930.34" y="519.87" width="7.9" height="11.70" fill="#E0AE74"/><rect x="930.34" y="510.67" width="7.9" height="9.20" fill="#6271CF"/><rect x="930.34" y="506.97" width="7.9" height="3.70" fill="#CE6F5F"/><rect x="930.34" y="503.47" width="7.9" height="3.50" fill="#5BBDCB"/><rect x="930.34" y="496.03" width="7.9" height="7.44" fill="#CDBF62"/><rect x="949.02" y="589.47" width="7.9" height="56.43" fill="#7ACF97"/><rect x="949.02" y="566.47" width="7.9" height="23.00" fill="#8C9FDF"/><rect x="949.02" y="554.77" width="7.9" height="11.70" fill="#7F61C3"/><rect x="949.02" y="542.97" width="7.9" height="11.80" fill="#C872CC"/><rect x="949.02" y="531.57" width="7.9" height="11.40" fill="#B15A55"/><rect x="949.02" y="519.87" width="7.9" height="11.70" fill="#E0AE74"/><rect x="949.02" y="510.67" width="7.9" height="9.20" fill="#6271CF"/><rect x="949.02" y="506.97" width="7.9" height="3.70" fill="#CE6F5F"/><rect x="949.02" y="503.47" width="7.9" height="3.50" fill="#5BBDCB"/><rect x="949.02" y="494.03" width="7.9" height="9.44" fill="#CDBF62"/><rect x="958.36" y="589.47" width="7.9" height="56.43" fill="#7ACF97"/><rect x="958.36" y="566.47" width="7.9" height="23.00" fill="#8C9FDF"/><rect x="958.36" y="554.77" width="7.9" height="11.70" fill="#7F61C3"/><rect x="958.36" y="542.97" width="7.9" height="11.80" fill="#C872CC"/><rect x="958.36" y="531.57" width="7.9" height="11.40" fill="#B15A55"/><rect x="958.36" y="519.87" width="7.9" height="11.70" fill="#E0AE74"/><rect x="958.36" y="510.67" width="7.9" height="9.20" fill="#6271CF"/><rect x="958.36" y="506.97" width="7.9" height="3.70" fill="#CE6F5F"/><rect x="958.36" y="503.47" width="7.9" height="3.50" fill="#5BBDCB"/><rect x="958.36" y="485.13" width="7.9" height="18.34" fill="#CDBF62"/><rect x="967.70" y="589.47" width="7.9" height="56.43" fill="#7ACF97"/><rect x="967.70" y="566.47" width="7.9" height="23.00" fill="#8C9FDF"/><rect x="967.70" y="554.77" width="7.9" height="11.70" fill="#7F61C3"/><rect x="967.70" y="542.97" width="7.9" height="11.80" fill="#C872CC"/><rect x="967.70" y="531.57" width="7.9" height="11.40" fill="#B15A55"/><rect x="967.70" y="519.87" width="7.9" height="11.70" fill="#E0AE74"/><rect x="967.70" y="510.67" width="7.9" height="9.20" fill="#6271CF"/><rect x="967.70" y="506.97" width="7.9" height="3.70" fill="#CE6F5F"/><rect x="967.70" y="503.47" width="7.9" height="3.50" fill="#5BBDCB"/><rect x="967.70" y="487.13" width="7.9" height="16.34" fill="#CDBF62"/><rect x="977.04" y="589.47" width="7.9" height="56.43" fill="#7ACF97"/><rect x="977.04" y="566.47" width="7.9" height="23.00" fill="#8C9FDF"/><rect x="977.04" y="554.77" width="7.9" height="11.70" fill="#7F61C3"/><rect x="977.04" y="542.97" width="7.9" height="11.80" fill="#C872CC"/><rect x="977.04" y="531.57" width="7.9" height="11.40" fill="#B15A55"/><rect x="977.04" y="519.87" width="7.9" height="11.70" fill="#E0AE74"/><rect x="977.04" y="510.67" width="7.9" height="9.20" fill="#6271CF"/><rect x="977.04" y="506.97" width="7.9" height="3.70" fill="#CE6F5F"/><rect x="977.04" y="503.47" width="7.9" height="3.50" fill="#5BBDCB"/><rect x="977.04" y="485.13" width="7.9" height="18.34" fill="#CDBF62"/><rect x="986.38" y="589.47" width="7.9" height="56.43" fill="#7ACF97"/><rect x="986.38" y="566.47" width="7.9" height="23.00" fill="#8C9FDF"/><rect x="986.38" y="554.77" width="7.9" height="11.70" fill="#7F61C3"/><rect x="986.38" y="542.97" width="7.9" height="11.80" fill="#C872CC"/><rect x="986.38" y="531.57" width="7.9" height="11.40" fill="#B15A55"/><rect x="986.38" y="519.87" width="7.9" height="11.70" fill="#E0AE74"/><rect x="986.38" y="510.67" width="7.9" height="9.20" fill="#6271CF"/><rect x="986.38" y="506.97" width="7.9" height="3.70" fill="#CE6F5F"/><rect x="986.38" y="503.47" width="7.9" height="3.50" fill="#5BBDCB"/><rect x="986.38" y="486.46" width="7.9" height="17.00" fill="#CDBF62"/><rect x="995.72" y="589.47" width="7.9" height="56.43" fill="#7ACF97"/><rect x="995.72" y="566.47" width="7.9" height="23.00" fill="#8C9FDF"/><rect x="995.72" y="554.77" width="7.9" height="11.70" fill="#7F61C3"/><rect x="995.72" y="542.97" width="7.9" height="11.80" fill="#C872CC"/><rect x="995.72" y="531.57" width="7.9" height="11.40" fill="#B15A55"/><rect x="995.72" y="519.87" width="7.9" height="11.70" fill="#E0AE74"/><rect x="995.72" y="510.67" width="7.9" height="9.20" fill="#6271CF"/><rect x="995.72" y="506.97" width="7.9" height="3.70" fill="#CE6F5F"/><rect x="995.72" y="503.47" width="7.9" height="3.50" fill="#5BBDCB"/><rect x="995.72" y="477.12" width="7.9" height="26.35" fill="#CDBF62"/><rect x="1005.06" y="589.47" width="7.9" height="56.43" fill="#7ACF97"/><rect x="1005.06" y="566.47" width="7.9" height="23.00" fill="#8C9FDF"/><rect x="1005.06" y="554.77" width="7.9" height="11.70" fill="#7F61C3"/><rect x="1005.06" y="542.97" width="7.9" height="11.80" fill="#C872CC"/><rect x="1005.06" y="531.57" width="7.9" height="11.40" fill="#B15A55"/><rect x="1005.06" y="519.87" width="7.9" height="11.70" fill="#E0AE74"/><rect x="1005.06" y="510.67" width="7.9" height="9.20" fill="#6271CF"/><rect x="1005.06" y="506.97" width="7.9" height="3.70" fill="#CE6F5F"/><rect x="1005.06" y="503.47" width="7.9" height="3.50" fill="#5BBDCB"/><rect x="1005.06" y="492.25" width="7.9" height="11.22" fill="#CDBF62"/><rect x="1023.74" y="588.58" width="7.9" height="57.32" fill="#7ACF97"/><rect x="1023.74" y="565.58" width="7.9" height="23.00" fill="#8C9FDF"/><rect x="1023.74" y="553.88" width="7.9" height="11.70" fill="#7F61C3"/><rect x="1023.74" y="542.08" width="7.9" height="11.80" fill="#C872CC"/><rect x="1023.74" y="530.68" width="7.9" height="11.40" fill="#B15A55"/><rect x="1023.74" y="518.98" width="7.9" height="11.70" fill="#E0AE74"/><rect x="1023.74" y="509.78" width="7.9" height="9.20" fill="#6271CF"/><rect x="1023.74" y="506.08" width="7.9" height="3.70" fill="#CE6F5F"/><rect x="1023.74" y="502.58" width="7.9" height="3.50" fill="#5BBDCB"/><rect x="1023.74" y="491.36" width="7.9" height="11.22" fill="#CDBF62"/><rect x="1033.08" y="589.47" width="7.9" height="56.43" fill="#7ACF97"/><rect x="1033.08" y="566.47" width="7.9" height="23.00" fill="#8C9FDF"/><rect x="1033.08" y="554.77" width="7.9" height="11.70" fill="#7F61C3"/><rect x="1033.08" y="542.97" width="7.9" height="11.80" fill="#C872CC"/><rect x="1033.08" y="531.57" width="7.9" height="11.40" fill="#B15A55"/><rect x="1033.08" y="519.87" width="7.9" height="11.70" fill="#E0AE74"/><rect x="1033.08" y="510.67" width="7.9" height="9.20" fill="#6271CF"/><rect x="1033.08" y="506.97" width="7.9" height="3.70" fill="#CE6F5F"/><rect x="1033.08" y="503.47" width="7.9" height="3.50" fill="#5BBDCB"/><rect x="1033.08" y="489.35" width="7.9" height="14.11" fill="#CDBF62"/><rect x="1051.76" y="589.47" width="7.9" height="56.43" fill="#7ACF97"/><rect x="1051.76" y="566.47" width="7.9" height="23.00" fill="#8C9FDF"/><rect x="1051.76" y="554.77" width="7.9" height="11.70" fill="#7F61C3"/><rect x="1051.76" y="542.97" width="7.9" height="11.80" fill="#C872CC"/><rect x="1051.76" y="531.57" width="7.9" height="11.40" fill="#B15A55"/><rect x="1051.76" y="519.87" width="7.9" height="11.70" fill="#E0AE74"/><rect x="1051.76" y="510.67" width="7.9" height="9.20" fill="#6271CF"/><rect x="1051.76" y="506.97" width="7.9" height="3.70" fill="#CE6F5F"/><rect x="1051.76" y="503.47" width="7.9" height="3.50" fill="#5BBDCB"/><rect x="1051.76" y="492.91" width="7.9" height="10.55" fill="#CDBF62"/><rect x="1061.10" y="588.35" width="7.9" height="57.55" fill="#7ACF97"/><rect x="1061.10" y="565.35" width="7.9" height="23.00" fill="#8C9FDF"/><rect x="1061.10" y="553.65" width="7.9" height="11.70" fill="#7F61C3"/><rect x="1061.10" y="541.85" width="7.9" height="11.80" fill="#C872CC"/><rect x="1061.10" y="530.45" width="7.9" height="11.40" fill="#B15A55"/><rect x="1061.10" y="518.75" width="7.9" height="11.70" fill="#E0AE74"/><rect x="1061.10" y="509.55" width="7.9" height="9.20" fill="#6271CF"/><rect x="1061.10" y="505.85" width="7.9" height="3.70" fill="#CE6F5F"/><rect x="1061.10" y="502.35" width="7.9" height="3.50" fill="#5BBDCB"/><rect x="1061.10" y="492.02" width="7.9" height="10.33" fill="#CDBF62"/><rect x="1070.44" y="589.47" width="7.9" height="56.43" fill="#7ACF97"/><rect x="1070.44" y="566.47" width="7.9" height="23.00" fill="#8C9FDF"/><rect x="1070.44" y="554.77" width="7.9" height="11.70" fill="#7F61C3"/><rect x="1070.44" y="542.97" width="7.9" height="11.80" fill="#C872CC"/><rect x="1070.44" y="531.57" width="7.9" height="11.40" fill="#B15A55"/><rect x="1070.44" y="519.87" width="7.9" height="11.70" fill="#E0AE74"/><rect x="1070.44" y="510.67" width="7.9" height="9.20" fill="#6271CF"/><rect x="1070.44" y="506.97" width="7.9" height="3.70" fill="#CE6F5F"/><rect x="1070.44" y="503.47" width="7.9" height="3.50" fill="#5BBDCB"/><rect x="1070.44" y="492.69" width="7.9" height="10.77" fill="#CDBF62"/><rect x="1098.46" y="589.47" width="7.9" height="56.43" fill="#7ACF97"/><rect x="1098.46" y="566.47" width="7.9" height="23.00" fill="#8C9FDF"/><rect x="1098.46" y="554.77" width="7.9" height="11.70" fill="#7F61C3"/><rect x="1098.46" y="542.97" width="7.9" height="11.80" fill="#C872CC"/><rect x="1098.46" y="531.57" width="7.9" height="11.40" fill="#B15A55"/><rect x="1098.46" y="519.87" width="7.9" height="11.70" fill="#E0AE74"/><rect x="1098.46" y="510.67" width="7.9" height="9.20" fill="#6271CF"/><rect x="1098.46" y="506.97" width="7.9" height="3.70" fill="#CE6F5F"/><rect x="1098.46" y="503.47" width="7.9" height="3.50" fill="#5BBDCB"/><rect x="1098.46" y="490.24" width="7.9" height="13.22" fill="#CDBF62"/><rect x="1107.80" y="589.47" width="7.9" height="56.43" fill="#7ACF97"/><rect x="1107.80" y="566.47" width="7.9" height="23.00" fill="#8C9FDF"/><rect x="1107.80" y="554.77" width="7.9" height="11.70" fill="#7F61C3"/><rect x="1107.80" y="542.97" width="7.9" height="11.80" fill="#C872CC"/><rect x="1107.80" y="531.57" width="7.9" height="11.40" fill="#B15A55"/><rect x="1107.80" y="519.87" width="7.9" height="11.70" fill="#E0AE74"/><rect x="1107.80" y="510.67" width="7.9" height="9.20" fill="#6271CF"/><rect x="1107.80" y="506.97" width="7.9" height="3.70" fill="#CE6F5F"/><rect x="1107.80" y="503.47" width="7.9" height="3.50" fill="#5BBDCB"/><rect x="1107.80" y="489.13" width="7.9" height="14.33" fill="#CDBF62"/><rect x="752.88" y="584.72" width="7.9" height="61.18" fill="#7ACF97"/><rect x="752.88" y="560.25" width="7.9" height="24.47" fill="#8C9FDF"/><rect x="752.88" y="547.35" width="7.9" height="12.90" fill="#7F61C3"/><rect x="752.88" y="534.67" width="7.9" height="12.68" fill="#C872CC"/><rect x="752.88" y="523.10" width="7.9" height="11.57" fill="#B15A55"/><rect x="752.88" y="511.31" width="7.9" height="11.79" fill="#E0AE74"/><rect x="752.88" y="502.41" width="7.9" height="8.90" fill="#6271CF"/><rect x="752.88" y="499.07" width="7.9" height="3.34" fill="#CE6F5F"/><rect x="752.88" y="482.38" width="7.9" height="16.69" fill="#CDBF62"/><rect x="752.88" y="478.16" width="7.9" height="4.23" fill="#D9A566"/><rect x="939.68" y="586.28" width="7.9" height="59.62" fill="#7ACF97"/><rect x="939.68" y="562.47" width="7.9" height="23.80" fill="#8C9FDF"/><rect x="939.68" y="549.57" width="7.9" height="12.90" fill="#7F61C3"/><rect x="939.68" y="537.56" width="7.9" height="12.01" fill="#C872CC"/><rect x="939.68" y="526.21" width="7.9" height="11.35" fill="#B15A55"/><rect x="939.68" y="514.64" width="7.9" height="11.57" fill="#E0AE74"/><rect x="939.68" y="505.30" width="7.9" height="9.34" fill="#6271CF"/><rect x="939.68" y="501.96" width="7.9" height="3.34" fill="#CE6F5F"/><rect x="939.68" y="498.40" width="7.9" height="3.56" fill="#5BBDCB"/><rect x="939.68" y="494.18" width="7.9" height="4.23" fill="#CDBF62"/><rect x="1014.40" y="586.28" width="7.9" height="59.62" fill="#7ACF97"/><rect x="1014.40" y="562.03" width="7.9" height="24.25" fill="#8C9FDF"/><rect x="1014.40" y="549.57" width="7.9" height="12.46" fill="#7F61C3"/><rect x="1014.40" y="537.33" width="7.9" height="12.24" fill="#C872CC"/><rect x="1014.40" y="526.21" width="7.9" height="11.12" fill="#B15A55"/><rect x="1014.40" y="514.20" width="7.9" height="12.01" fill="#E0AE74"/><rect x="1014.40" y="505.30" width="7.9" height="8.90" fill="#6271CF"/><rect x="1014.40" y="501.74" width="7.9" height="3.56" fill="#CE6F5F"/><rect x="1014.40" y="497.96" width="7.9" height="3.78" fill="#5BBDCB"/><rect x="1014.40" y="483.94" width="7.9" height="14.02" fill="#CDBF62"/><rect x="1042.42" y="589.62" width="7.9" height="56.28" fill="#7ACF97"/><rect x="1042.42" y="565.81" width="7.9" height="23.80" fill="#8C9FDF"/><rect x="1042.42" y="554.24" width="7.9" height="11.57" fill="#7F61C3"/><rect x="1042.42" y="542.45" width="7.9" height="11.79" fill="#C872CC"/><rect x="1042.42" y="530.88" width="7.9" height="11.57" fill="#B15A55"/><rect x="1042.42" y="519.54" width="7.9" height="11.35" fill="#E0AE74"/><rect x="1042.42" y="510.86" width="7.9" height="8.68" fill="#6271CF"/><rect x="1042.42" y="507.52" width="7.9" height="3.34" fill="#5BBDCB"/><rect x="1042.42" y="499.07" width="7.9" height="8.45" fill="#CDBF62"/><rect x="1042.42" y="481.27" width="7.9" height="17.80" fill="#C872CC"/><rect x="1079.78" y="587.17" width="7.9" height="58.73" fill="#7ACF97"/><rect x="1079.78" y="563.59" width="7.9" height="23.58" fill="#8C9FDF"/><rect x="1079.78" y="551.80" width="7.9" height="11.79" fill="#7F61C3"/><rect x="1079.78" y="539.56" width="7.9" height="12.24" fill="#C872CC"/><rect x="1079.78" y="527.99" width="7.9" height="11.57" fill="#B15A55"/><rect x="1079.78" y="516.42" width="7.9" height="11.57" fill="#E0AE74"/><rect x="1079.78" y="507.30" width="7.9" height="9.12" fill="#6271CF"/><rect x="1079.78" y="503.96" width="7.9" height="3.34" fill="#CE6F5F"/><rect x="1079.78" y="500.63" width="7.9" height="3.34" fill="#5BBDCB"/><rect x="1079.78" y="488.17" width="7.9" height="12.46" fill="#CDBF62"/><rect x="1089.12" y="587.17" width="7.9" height="58.73" fill="#7ACF97"/><rect x="1089.12" y="563.59" width="7.9" height="23.58" fill="#8C9FDF"/><rect x="1089.12" y="548.46" width="7.9" height="15.13" fill="#7F61C3"/><rect x="1089.12" y="536.45" width="7.9" height="12.01" fill="#C872CC"/><rect x="1089.12" y="525.10" width="7.9" height="11.35" fill="#B15A55"/><rect x="1089.12" y="513.53" width="7.9" height="11.57" fill="#E0AE74"/><rect x="1089.12" y="503.96" width="7.9" height="9.57" fill="#6271CF"/><rect x="1089.12" y="500.63" width="7.9" height="3.34" fill="#CE6F5F"/><rect x="1089.12" y="487.28" width="7.9" height="13.35" fill="#CDBF62"/><rect x="1089.12" y="480.16" width="7.9" height="7.12" fill="#6CCB7E"/><rect x="1117.14" y="606.08" width="7.9" height="39.82" fill="#7ACF97"/><rect x="1117.14" y="589.62" width="7.9" height="16.46" fill="#8C9FDF"/><rect x="1117.14" y="581.38" width="7.9" height="8.23" fill="#7F61C3"/><rect x="1117.14" y="572.93" width="7.9" height="8.45" fill="#C872CC"/><rect x="1117.14" y="564.92" width="7.9" height="8.01" fill="#B15A55"/><rect x="1117.14" y="556.91" width="7.9" height="8.01" fill="#E0AE74"/><rect x="1117.14" y="549.79" width="7.9" height="7.12" fill="#6271CF"/><rect x="1117.14" y="547.35" width="7.9" height="2.45" fill="#CE6F5F"/><rect x="1117.14" y="545.34" width="7.9" height="2.00" fill="#5BBDCB"/><rect x="1117.14" y="532.89" width="7.9" height="12.46" fill="#CDBF62"/><rect x="725.20" y="638.20" width="7.8" height="7.70" fill="#7ACF97"/><rect x="725.20" y="635.00" width="7.8" height="3.20" fill="#8C9FDF"/><rect x="725.20" y="632.80" width="7.8" height="2.20" fill="#7F61C3"/><rect x="725.20" y="631.20" width="7.8" height="1.60" fill="#C872CC"/><rect x="725.20" y="629.60" width="7.8" height="1.60" fill="#B15A55"/><rect x="725.20" y="628.20" width="7.8" height="1.40" fill="#E0AE74"/><rect x="725.20" y="627.00" width="7.8" height="1.20" fill="#6271CF"/><rect x="725.20" y="626.40" width="7.8" height="0.60" fill="#CE6F5F"/><rect x="725.20" y="625.80" width="7.8" height="0.60" fill="#5BBDCB"/><rect x="725.20" y="624.80" width="7.8" height="1.00" fill="#CDBF62"/></g>
<rect x="724.2" y="476.5" width="1" height="170" fill="#DCDCDC"/>
<rect x="724.2" y="646" width="406.8" height="1" fill="#DCDCDC"/>
<rect x="724.20" y="646.5" width="1" height="6" fill="#DCDCDC"/>
<rect x="845.70" y="646.5" width="1" height="6" fill="#DCDCDC"/>
<rect x="995.00" y="646.5" width="1" height="6" fill="#DCDCDC"/>
<rect x="1130.00" y="646.5" width="1" height="6" fill="#DCDCDC"/>
<rect x="719.20" y="646.00" width="5.5" height="1" fill="#DCDCDC"/>
<text x="715.90" y="650.40" font-size="11" fill="#69707D" text-anchor="end" textLength="6.20" lengthAdjust="spacingAndGlyphs" >0</text>
<rect x="719.20" y="612.00" width="5.5" height="1" fill="#DCDCDC"/>
<text x="715.90" y="616.40" font-size="11" fill="#69707D" text-anchor="end" textLength="27.92" lengthAdjust="spacingAndGlyphs" >2,000</text>
<rect x="719.20" y="578.00" width="5.5" height="1" fill="#DCDCDC"/>
<text x="715.90" y="582.40" font-size="11" fill="#69707D" text-anchor="end" textLength="27.92" lengthAdjust="spacingAndGlyphs" >4,000</text>
<rect x="719.20" y="544.00" width="5.5" height="1" fill="#DCDCDC"/>
<text x="715.90" y="548.40" font-size="11" fill="#69707D" text-anchor="end" textLength="27.92" lengthAdjust="spacingAndGlyphs" >6,000</text>
<rect x="719.20" y="510.00" width="5.5" height="1" fill="#DCDCDC"/>
<text x="715.90" y="514.40" font-size="11" fill="#69707D" text-anchor="end" textLength="27.92" lengthAdjust="spacingAndGlyphs" >8,000</text>
<rect x="719.20" y="476.00" width="5.5" height="1" fill="#DCDCDC"/>
<text x="715.90" y="480.40" font-size="11" fill="#69707D" text-anchor="end" textLength="33.50" lengthAdjust="spacingAndGlyphs" >10,000</text>
<text x="801.70" y="663.70" font-size="11" fill="#69707D" textLength="90.00" lengthAdjust="spacingAndGlyphs" >2019-08-18 00:00</text>
<text x="949.50" y="663.70" font-size="11" fill="#69707D" textLength="92.50" lengthAdjust="spacingAndGlyphs" >2019-08-20 00:00</text>
<text x="855.30" y="681.10" font-size="12" fill="#69707D" font-weight="bold" textLength="144.10" lengthAdjust="spacingAndGlyphs" >@timestamp per 3 hours</text>
<text x="0.00" y="0.00" font-size="12" fill="#69707D" font-weight="bold" text-anchor="middle" textLength="35.00" lengthAdjust="spacingAndGlyphs" transform="translate(670.6,561.9) rotate(-90)">Count</text>
<clipPath id="lc"><rect x="1130" y="466" width="140" height="231.5"/></clipPath><g clip-path="url(#lc)">
<circle cx="1145.1" cy="478.80" r="6.05" fill="#57C17B"/>
<text x="1157.20" y="482.30" font-size="12" fill="#535966" textLength="103.00" lengthAdjust="spacingAndGlyphs" >/usr/bin/python3.6</text>
<circle cx="1145.1" cy="502.80" r="6.05" fill="#6F87D8"/>
<text x="1157.20" y="506.30" font-size="12" fill="#535966" textLength="63.20" lengthAdjust="spacingAndGlyphs" >/bin/uname</text>
<circle cx="1145.1" cy="526.80" r="6.05" fill="#663DB8"/>
<text x="1157.20" y="530.30" font-size="12" fill="#535966" textLength="52.30" lengthAdjust="spacingAndGlyphs" >/bin/dash</text>
<circle cx="1145.1" cy="550.80" r="6.05" fill="#BC52BC"/>
<text x="1157.20" y="554.30" font-size="12" fill="#535966" textLength="51.60" lengthAdjust="spacingAndGlyphs" >/bin/grep</text>
<circle cx="1145.1" cy="574.80" r="6.05" fill="#9E3533"/>
<text x="1157.20" y="578.30" font-size="12" fill="#535966" textLength="57.00" lengthAdjust="spacingAndGlyphs" >/usr/bin/id</text>
<circle cx="1145.1" cy="598.80" r="6.05" fill="#DA9E5A"/>
<text x="1157.20" y="602.30" font-size="12" fill="#535966" textLength="35.60" lengthAdjust="spacingAndGlyphs" >/bin/ip</text>
<circle cx="1145.1" cy="622.80" r="6.05" fill="#3F4FC7"/>
<text x="1157.20" y="626.30" font-size="12" fill="#535966" textLength="107.00" lengthAdjust="spacingAndGlyphs" >/usr/lib/ipsec/cha...</text>
<circle cx="1145.1" cy="646.80" r="6.05" fill="#C4533D"/>
<text x="1157.20" y="650.30" font-size="12" fill="#535966" textLength="104.60" lengthAdjust="spacingAndGlyphs" >/usr/share/packe...</text>
<circle cx="1145.1" cy="670.80" r="6.05" fill="#3FAEC2"/>
<text x="1157.20" y="674.30" font-size="12" fill="#535966" textLength="102.00" lengthAdjust="spacingAndGlyphs" >/usr/share/filebe...</text>
<circle cx="1145.1" cy="694.80" r="6.05" fill="#C4AE43"/>
<text x="1157.20" y="698.30" font-size="12" fill="#535966" textLength="79.50" lengthAdjust="spacingAndGlyphs" >/usr/sbin/sshd</text>
</g>
<rect x="1272" y="473" width="4" height="158" fill="#B3B7BF"/>
<text x="1068.90" y="763.30" font-size="16" fill="#69707D" textLength="115.60" lengthAdjust="spacingAndGlyphs" >1–50 of 407268</text>
<rect x="1195.5" y="742.7" width="35.2" height="30" rx="4" fill="#F9FAFC"/>
<path d="M1216.6 751.8L1210.6 757.7L1216.6 763.6" fill="none" stroke="#9A9CA0" stroke-width="2.4"/>
<rect x="1235.2" y="742.7" width="34.6" height="30" rx="4" fill="#F3F5F9"/>
<path d="M1248.8 751.8L1254.8 757.7L1248.8 763.6" fill="none" stroke="#343741" stroke-width="2.4"/>
<rect x="1280" y="745" width="4" height="115" fill="#B3B7BF"/>
<rect x="6" y="806" width="1268" height="1" fill="#D3DAE6"/><rect x="6" y="844" width="1268" height="1" fill="#D3DAE6"/>
<text x="38.60" y="794.10" font-size="12" fill="#1a1c21" font-weight="bold" textLength="27.90" lengthAdjust="spacingAndGlyphs" >Time</text>
<path d="M71 789.8H78.8L74.9 794.2Z" fill="#006BB4"/>
<text x="217.30" y="794.10" font-size="12" fill="#1a1c21" font-weight="bold" textLength="60.90" lengthAdjust="spacingAndGlyphs" >host.name</text>
<text x="333.50" y="794.10" font-size="12" fill="#1a1c21" font-weight="bold" textLength="109.90" lengthAdjust="spacingAndGlyphs" >auditd.data.syscall</text>
<text x="509.10" y="794.10" font-size="12" fill="#1a1c21" font-weight="bold" textLength="114.90" lengthAdjust="spacingAndGlyphs" >process.executable</text>
<text x="689.00" y="794.10" font-size="12" fill="#1a1c21" font-weight="bold" textLength="73.20" lengthAdjust="spacingAndGlyphs" >process.title</text>
<path d="M16 818.5L20.5 823.3L16 828" fill="none" stroke="#343741" stroke-width="1.1"/>
<text x="38.60" y="828.30" font-size="12.5" fill="#343741" textLength="159.20" lengthAdjust="spacingAndGlyphs" >Aug 21, 2019 @ 17:07:20.694</text>
<text x="217.30" y="828.30" font-size="12.5" fill="#343741" textLength="39.30" lengthAdjust="spacingAndGlyphs" >mothra</text>
<text x="333.50" y="828.30" font-size="12.5" fill="#343741" textLength="38.80" lengthAdjust="spacingAndGlyphs" >execve</text>
<text x="509.10" y="828.30" font-size="12.5" fill="#343741" textLength="62.60" lengthAdjust="spacingAndGlyphs" >/bin/uname</text>
<text x="689.00" y="828.30" font-size="12.5" fill="#343741" textLength="37.00" lengthAdjust="spacingAndGlyphs" >uname</text>
</svg>
</body></html>
